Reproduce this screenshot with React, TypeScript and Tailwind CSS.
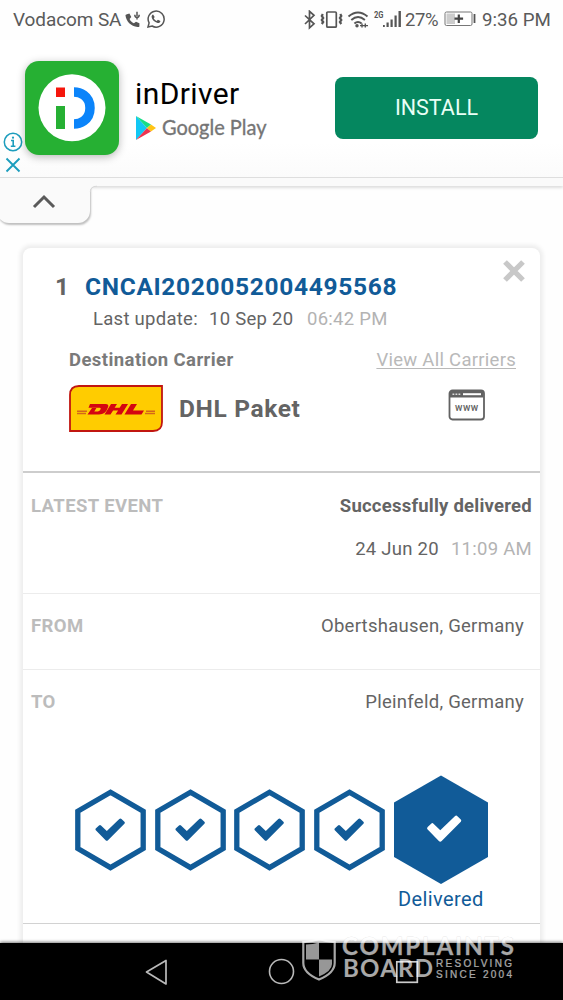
import React from "react";

const BLUE = "#115b98";

function StatusBar() {
  return (
    <header className="flex h-10 shrink-0 items-center pl-[13px] pr-3 text-[19px] leading-10 text-[#5a5a5a]">
      <span className="w-[109px] whitespace-nowrap tracking-[-0.1px]">Vodacom SA</span>
      <svg className="ml-[2px] h-5 w-5" viewBox="0 0 20 20">
        <path d="M3 4.200l2.400-.7L7.300 7 5.600 9c.8 2 2.300 3.400 4.300 4.300L12 11.700l3.400 1.500v3.200c-.5 .6-1 .7-1.800 .6C6.800 16.500 2.100 11 1.500 5.500 1.500 4.800 2.100 4.400 3 4.200z" fill="#555" />
        <path d="M13 1.800v4.400M10.800 4.700c0 3.600 4.400 3.600 4.400 0M13 7.800v1.700" stroke="#555" strokeWidth="1.500" fill="none" />
      </svg>
      <svg className="ml-[2px] h-5 w-5" viewBox="0 0 20 20">
        <path d="M2 17l1.100-4.100A8 8 0 1 1 6.100 16z" fill="none" stroke="#555" strokeWidth="1.500" />
        <path d="M7.100 4.500l1.600 2.500-.9 1.200c.6 1.300 1.500 2.100 2.900 2.700l1.200-1.100 2.500 1.200c-.2 1.700-1.500 2.300-2.800 2-3.200-.8-5.600-3.300-6-5.900-.1-1.200.5-2.300 1.500-2.600z" fill="#555" />
      </svg>
      <svg className="ml-auto h-5 w-[104px] shrink-0" viewBox="0 0 104 20">
        <g fill="none" stroke="#555" strokeWidth="1.700">
          <path d="M2 5.500l9 8.300-4.500 4V1.300l4.500 4L2 14" />
          <rect x="23.800" y="2" width="9.500" height="15.200" rx="1" />
          <path d="M19.800 4l-1 2 1.400 2-1.400 2 1.400 2-1.400 2M37.300 4l1 2-1.400 2 1.400 2-1.400 2 1.400 2" strokeWidth="2.200" />
          <path d="M45.500 6.500Q55-1.500 64.500 6.500M48.300 10Q55 4 61.900 10M51.400 13.500q3.600-3.200 7.200 0" strokeWidth="1.900" />
          <path d="M57 15.600h8M59 13.500v4M62.300 13.500v4" strokeWidth="1.400" />
        </g>
        <circle cx="54" cy="15.800" r="1.700" fill="#555" />
        <text x="71" y="8" fontSize="9" fontWeight="700" textLength="9.500" lengthAdjust="spacingAndGlyphs" fill="#555">2G</text>
        <path d="M80 15h1.800v2H80zM83.500 12.500h2.200V17h-2.200zM87.500 9.500h2.200V17h-2.200zM91.500 5.500h2.200V17h-2.200zM95.500 1h2.400v16h-2.400z" fill="#555" />
      </svg>
      <span className="ml-[-2px] w-[39px] whitespace-nowrap text-[18.500px] tracking-[-0.400px]">27%</span>
      <svg className="h-5 w-8 shrink-0" viewBox="0 0 32 20">
        <rect x="1" y="2" width="27" height="13.500" rx="1.500" fill="#fff" stroke="#777" />
        <path d="M2.500 3.500H11v10.500H2.500z" fill="#ccc" />
        <path d="M14.800 4.500v8.500M10.500 8.700h8.600" stroke="#444" strokeWidth="2.200" />
        <path d="M30.500 4v9" stroke="#555" strokeWidth="1.800" />
      </svg>
      <span className="ml-[6px] w-[69px] whitespace-nowrap text-[18.700px]">9:36 PM</span>
    </header>
  );
}

function AdBanner() {
  return (
    <section className="relative flex h-[138px] shrink-0 border-b border-[#dedede] bg-gradient-to-b from-white from-75% to-[#fbfbfb]">
      <div className="flex w-[25px] flex-col items-center gap-[5px] pt-[92px]">
        <svg className="h-5 w-5" viewBox="0 0 20 20" fill="none" stroke="#1c9dbd">
          <circle cx="10" cy="10" r="8.700" strokeWidth="1.500" />
          <path d="M8 8.500h2.200V14M7.800 14.200h4.600" strokeWidth="1.600" />
          <circle cx="10" cy="5.700" r="1.100" fill="#1c9dbd" stroke="none" />
        </svg>
        <svg className="h-[16px] w-[16px]" viewBox="0 0 16 16">
          <path d="M1.500 1.500l13 13M14.500 1.500l-13 13" stroke="#1c9dbd" strokeWidth="1.900" />
        </svg>
      </div>
      <div className="mt-[21px] size-[94px] rounded-[14px] bg-[#26b033] shadow-[0_2px_8px_rgba(0,0,0,0.28)]">
        <svg className="size-full" viewBox="0 0 94 94">
          <circle cx="47" cy="46.800" r="33.500" fill="#fff" />
          <path d="M31 26.500h9v9.500h-9z" fill="#f5160c" />
          <path d="M31 45h9v23h-9z" fill="#26b033" />
          <path d="M49 31c5 0 16 3 16 16s-11 16-16 16" stroke="#0b84fa" strokeWidth="9.500" fill="none" />
        </svg>
      </div>
      <div className="ml-4 flex w-[140px] flex-col pt-[34px]">
        <h1 className="whitespace-nowrap text-[30px] leading-10 tracking-[0.400px] text-black">inDriver</h1>
        <div className="flex h-7 items-center">
          <svg className="h-[26px] w-[21px] shrink-0" viewBox="0 0 21 26">
            <path d="M1 1v24L12 13z" fill="#12c7f4" />
            <path d="M1 1l15 8.500L12 13z" fill="#18dd85" />
            <path d="M1 25l11-12 4 3.500z" fill="#ed3450" />
            <path d="M16 9.500l5 3.500-5 3.500L12 13z" fill="#ffc414" />
          </svg>
          <svg className="ml-[6px] h-7 w-[108px] shrink-0 overflow-visible" viewBox="0 0 108 28">
            <text x="0" y="20.500" fontFamily="Lato" fontSize="21.500" textLength="104.500" lengthAdjust="spacingAndGlyphs" fill="#757575" stroke="#757575" strokeWidth=".35">Google Play</text>
          </svg>
        </div>
      </div>
      <button className="ml-auto mr-[25px] mt-[37px] h-[62px] w-[203px] rounded-lg bg-[#05875f] text-[21.500px] leading-[62px] text-[#e9fff6]">INSTALL</button>
    </section>
  );
}

function CheckIcon({ className, color }: { className: string; color: string }) {
  return (
    <svg className={className} viewBox="0 0 30 24">
      <path d="M1 10.200 L4 7.400 Q5 6.500 6 7.400 L11.800 13 L24.300 1 Q25.500 0 26.500 1 L29.400 3.800 Q30.300 4.800 29.400 5.800 L13 22.200 Q11.800 23.500 10.600 22.200 L.8 12.300 Q0 11.200 1 10.200z" fill={color} />
    </svg>
  );
}

function Step() {
  return (
    <div className="relative mt-[14px] h-[82px] w-[71px]">
      <svg className="size-full" viewBox="0 0 71 82">
        <path d="M35.500 3.200 L68.200 22.200 V59.500 L35.500 78.600 L2.800 59.500 V22.200z" fill="none" stroke={BLUE} strokeWidth="5.300" />
      </svg>
      <CheckIcon className="absolute left-[20px] top-[29px] h-6 w-[30px]" color={BLUE} />
    </div>
  );
}

function DhlLogo() {
  return (
    <svg className="h-[47px] w-[94px]" viewBox="0 0 94 47">
      <path d="M1 46V10Q1 1 10 1H93V37Q93 46 84 46z" fill="#fc0" stroke="#c11610" strokeWidth="1.800" />
      <g fill="#d40511">
        <path d="M21 19h15.500q4 0 2.400 3.500Q36.700 29.500 30 29.500H18.500l4.500-6.500h4.400l-2.100 3.600h3.300q1.800 0 3-2.300.7-1.600-.8-1.600H19.500z" />
        <path d="M42 19h6l-2.400 3.700h5L53 19h6l-6.500 10.500h-6l2.600-4h-5L41.500 29.500h-6z" />
        <path d="M62 19h6l-4 6.500h11l-2.500 4H55.500z" />
      </g>
      <path d="M8 26.200h10M8 28.500h9M77 26.200h9M76 28.500h10" stroke="#d4671a" strokeWidth="1.500" />
    </svg>
  );
}

function WebIcon() {
  return (
    <svg className="h-[32px] w-[38px]" viewBox="0 0 38 32">
      <rect x="1.500" y="1.500" width="34.500" height="29" rx="3" fill="#fff" stroke="#626262" strokeWidth="1.800" />
      <path d="M2 2h33.500v6.500H2z" fill="#626262" />
      <path d="M15 5.200h18" stroke="#fff" strokeWidth="2" />
      <path d="M4.500 5.200h8" stroke="#ddd" strokeWidth="1.500" strokeDasharray="1.800 1.200" />
      <text x="7" y="22" fontSize="10" fontWeight="500" textLength="23.500" fill="#626262">www</text>
    </svg>
  );
}

function InfoRow({ label, value, height }: { label: string; value: string; height: string }) {
  return (
    <div className={`flex justify-between pl-2 pr-4 pt-[18px] leading-7 ${height}`}>
      <span className="font-bold tracking-[0.400px] text-[#bcbcbc]">{label}</span>
      <span>{value}</span>
    </div>
  );
}

function TrackingCard() {
  return (
    <article className="mx-[23px] mt-[62px] flex h-[720px] w-[517px] flex-col rounded-t-lg bg-white text-[18.500px] tracking-[0.270px] text-[#646464] shadow-[0_0_4px_3px_rgba(0,0,0,0.07)]">
      <div className="flex h-[225px] shrink-0 flex-col border-b-2 border-[#cdcdcd]">
        <div className="flex h-[55px] text-[24.500px] font-bold leading-[30px]">
          <span className="ml-8 w-[30px] pt-6">1</span>
          <span className="whitespace-nowrap pt-6 tracking-[0.680px] text-[#115b98]">CNCAI2020052004495568</span>
          <svg className="ml-auto mr-[15px] mt-[12px] size-[22px]" viewBox="0 0 22 22">
            <path d="M2 2l18 18M20 2L2 20" stroke="#c8c8c8" strokeWidth="5.200" />
          </svg>
        </div>
        <div className="ml-[70px] flex h-8 whitespace-nowrap leading-8">
          <span className="w-[116px]">Last update:</span>
          <span className="w-[98px]">10 Sep 20</span>
          <span className="text-[#b3b3b3]">06:42 PM</span>
        </div>
        <div className="ml-[46px] mr-6 mt-[11px] flex h-7 justify-between leading-7">
          <span className="font-bold tracking-[0.420px] text-[#7a7a7a]">Destination Carrier</span>
          <a className="text-[#b9b9b9] underline decoration-1 underline-offset-2">View All Carriers</a>
        </div>
        <div className="ml-[46px] mr-[54px] mt-[11px] flex h-[47px] items-center">
          <DhlLogo />
          <span className="ml-4 pt-px text-[24.500px] font-bold tracking-[0.650px]">DHL Paket</span>
          <span className="mb-2 ml-auto"><WebIcon /></span>
        </div>
      </div>
      <div className="h-[121px] shrink-0 border-b border-[#ececec] pl-2 pr-2 pt-[19px]">
        <div className="flex justify-between leading-7">
          <span className="font-bold tracking-[0.400px] text-[#bcbcbc]">LATEST EVENT</span>
          <span className="font-bold tracking-[0.230px]">Successfully delivered</span>
        </div>
        <div className="mt-[15px] flex justify-end gap-3 leading-7">
          <span>24 Jun 20</span>
          <span className="text-[#b3b3b3]">11:09 AM</span>
        </div>
      </div>
      <InfoRow label="FROM" value="Obertshausen, Germany" height="h-[76px] border-b border-[#ececec]" />
      <InfoRow label="TO" value="Pleinfeld, Germany" height="h-[105px]" />
      <div className="flex h-[149px] gap-[8.700px] border-b border-[#d2d2d2] pl-[52px]">
        <Step />
        <Step />
        <Step />
        <Step />
        <div className="flex w-[94px] flex-col items-center">
          <div className="relative h-[109px] w-[94px] shrink-0">
            <svg className="size-full" viewBox="0 0 94 109">
              <path d="M47 .5l47 27v54.500l-47 27L0 82V27.500z" fill={BLUE} />
            </svg>
            <CheckIcon className="absolute left-[32px] top-[40px] h-[28px] w-[36px]" color="#fff" />
          </div>
          <span className="pt-px text-[20px] leading-[29px] tracking-[0.400px] text-[#115b98]">Delivered</span>
        </div>
      </div>
    </article>
  );
}

function Watermark() {
  return (
    <svg className="absolute left-[300px] top-[934px] h-[50px] w-[220px] overflow-visible" viewBox="0 0 220 50" fill="#fff" opacity="0.66">
      <path d="M3.300 8Q11 8 19 5q8 3 15.700 3v21q0 10-15.700 16.500Q3.300 39 3.300 29z" fill="none" stroke="#fff" strokeWidth="2.200" />
      <path d="M6 10.500q7 0 13-2v17H6zM19 25.500h13V30q0 7-13 12.500z" opacity=".9" />
      <g fontFamily="Lato" fontWeight="700">
        <text x="42" y="20.500" fontSize="24" textLength="172" stroke="#bbb" strokeWidth=".4" paintOrder="stroke">COMPLAINTS</text>
        <text x="43" y="42.500" fontSize="24" textLength="90">BOARD</text>
      </g>
      <g fontFamily="Liberation Sans">
        <text x="136" y="33" fontSize="10" textLength="76" stroke="#fff" strokeWidth=".2">RESOLVING</text>
        <text x="136" y="43.500" fontSize="10" textLength="76" stroke="#fff" strokeWidth=".2">SINCE 2004</text>
      </g>
    </svg>
  );
}

function NavBar() {
  return (
    <nav className="relative flex h-[57px] shrink-0 items-center bg-black pl-[145px] shadow-[0_-1px_3px_rgba(0,0,0,0.5)]">
      <svg className="h-[28px] w-[23px]" viewBox="0 0 23 28">
        <path d="M1.500 14L21 2.500v23.500z" fill="none" stroke="#bababa" strokeWidth="1.700" strokeLinejoin="round" />
      </svg>
      <svg className="ml-[100px] size-[27px]" viewBox="0 0 27 27">
        <circle cx="13.500" cy="13.500" r="12" fill="none" stroke="#bababa" strokeWidth="1.600" />
      </svg>
      <svg className="ml-[100px] size-[24px]" viewBox="0 0 24 24">
        <rect x="1.800" y="1.800" width="20.500" height="20.500" fill="none" stroke="#ccc" strokeWidth="1.700" />
      </svg>
    </nav>
  );
}

export default function App() {
  return (
    <div className="relative flex h-[1000px] w-[563px] flex-col overflow-hidden bg-[#fefefe] font-['Roboto',sans-serif]">
      <StatusBar />
      <AdBanner />
      <main className="flex h-[765px] shrink-0 flex-col overflow-hidden">
        <div className="relative h-2 shrink-0 bg-[#fafafa] shadow-[0_2px_3px_rgba(0,0,0,0.13)]">
          <div className="absolute left-[-3px] top-0 flex h-[45px] w-[93px] items-center justify-center rounded-b-xl bg-[#fafafa] shadow-[1px_2px_2px_rgba(0,0,0,0.25)]">
            <svg className="mt-px h-[15px] w-6" viewBox="0 0 24 15">
              <path d="M2 13L12 3l10 10" fill="none" stroke="#5a5a5a" strokeWidth="3" />
            </svg>
          </div>
          <svg className="absolute left-[88px] top-0 h-[14px] w-[9px]" viewBox="0 0 9 14">
            <path d="M0 0h9v8Q2 8 2 14H0z" fill="#fafafa" />
            <path d="M9 8.200Q2.300 8.200 2.300 14" fill="none" stroke="#d8d8d8" />
          </svg>
        </div>
        <TrackingCard />
      </main>
      <NavBar />
      <Watermark />
    </div>
  );
}
